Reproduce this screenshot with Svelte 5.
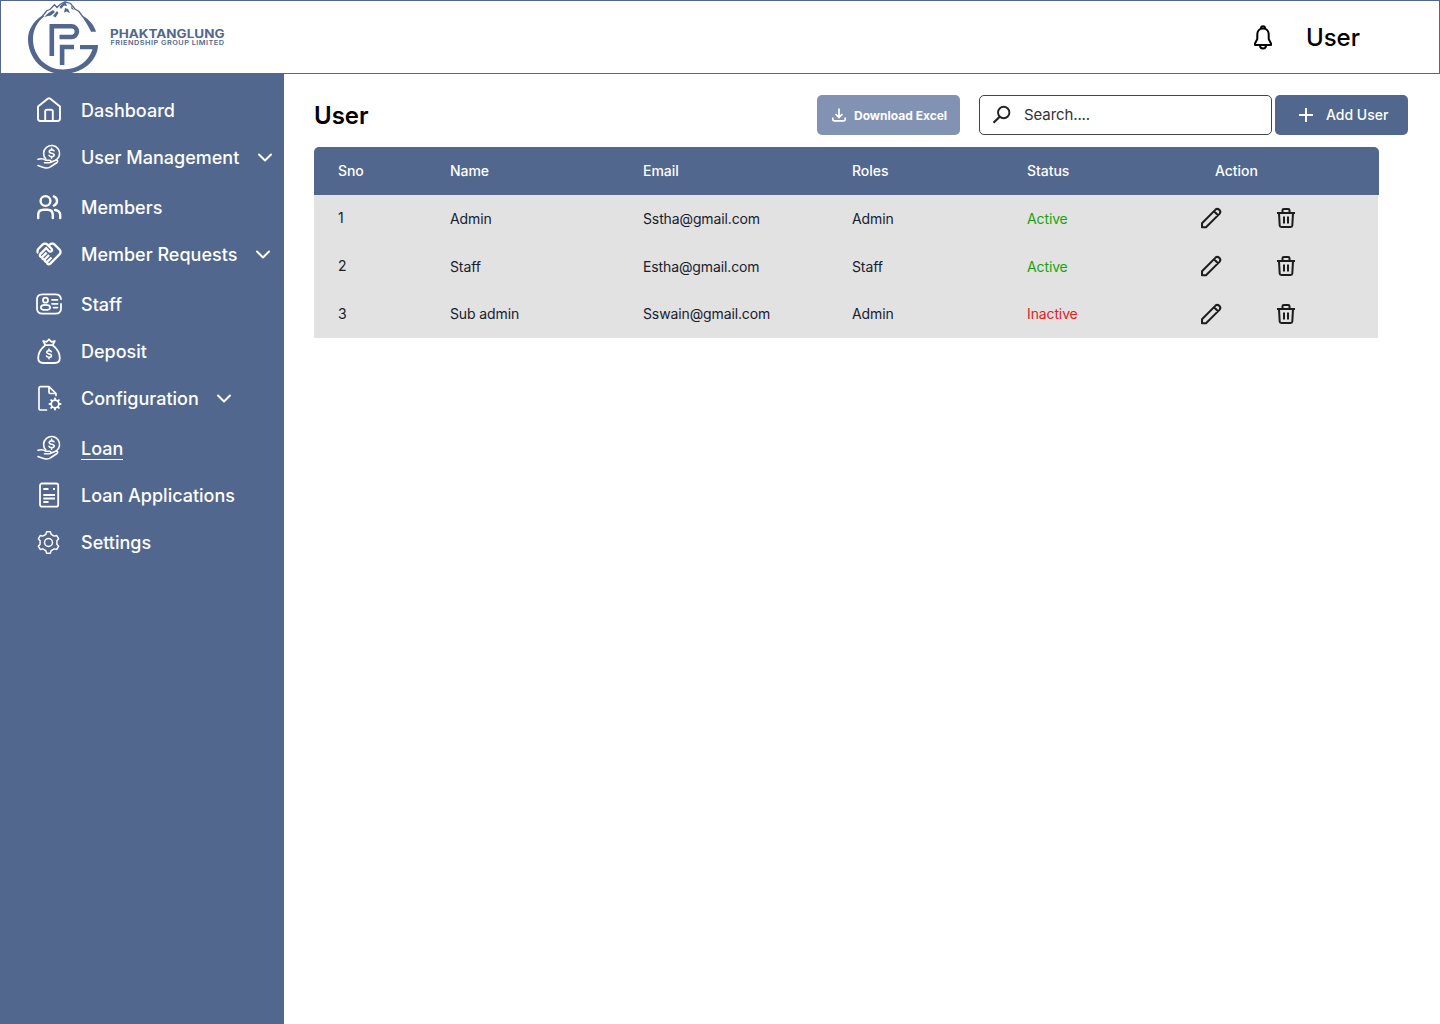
<script>
  const menu = [
    { label: 'Dashboard', icon: 'home' },
    { label: 'User Management', icon: 'loan', sub: true },
    { label: 'Members', icon: 'members' },
    { label: 'Member Requests', icon: 'handshake', sub: true },
    { label: 'Staff', icon: 'staff' },
    { label: 'Deposit', icon: 'deposit' },
    { label: 'Configuration', icon: 'config', sub: true },
    { label: 'Loan', icon: 'loan', active: true },
    { label: 'Loan Applications', icon: 'form' },
    { label: 'Settings', icon: 'settings' }
  ];

  const users = [
    { sno: 1, name: 'Admin', email: 'Sstha@gmail.com', role: 'Admin', status: 'Active' },
    { sno: 2, name: 'Staff', email: 'Estha@gmail.com', role: 'Staff', status: 'Active' },
    { sno: 3, name: 'Sub admin', email: 'Sswain@gmail.com', role: 'Admin', status: 'Inactive' }
  ];

  // Outline of a toothed wheel centred on (cx, cy).
  function gear(cx, cy, inner, outer, teeth) {
    const step = (Math.PI * 2) / teeth;
    const points = [];
    for (let i = 0; i < teeth; i++) {
      const a = i * step;
      for (const [f, r] of [[-0.3, inner], [-0.17, outer], [0.17, outer], [0.3, inner]]) {
        points.push(`${(cx + r * Math.sin(a + f * step)).toFixed(2)} ${(cy - r * Math.cos(a + f * step)).toFixed(2)}`);
      }
    }
    return 'M' + points.join('L') + 'Z';
  }
</script>

<header class="topbar">
  <svg class="logo" width="200" height="74" viewBox="27 0 200 74" role="img" aria-label="Phaktanglung Friendship Group Limited">
    <g fill="#52678d">
      <path d="M43 15C32 22 28 31 28 39C28 58 43 74 63 74C83 74 98 60 98 45H80V49.300H92.500C89 61 78 69.500 63 69.500C46 69.500 33 56 33 39C33 30 37 22 44 16.500Z" />
      <path d="M83 16C90 20 94.500 26 96 31.800H91C88 25 84 20 82 16Z" />
      <path d="M44 17L49 12.500L53 10L55 12L51 15.500L48 16Z" />
      <path d="M53 16L57 11L58.500 13L55.500 17.500Z" />
      <path d="M65 8L68 9L70 13L66.500 11.500L64 12.500Z" />
      <path d="M71 5.500L74 10L71.500 9Z" />
      <path d="M62 4L65.500 2L67 6L64 5.500L61 9L59.500 7Z" />
    </g>
    <path d="M42.500 16L47 10.500L50 9.500L54.500 4.800L57 7.500L60 4.500L65 1.800L70.500 3.500L75 9L79 11.500L83 17" fill="none" stroke="#52678d" stroke-width="1.300" />
    <g fill="none" stroke="#52678d" stroke-width="4.600">
      <path d="M51.800 56V26.200H71.500A5.400 5.400 0 0 1 71.500 37H59.500" />
      <path d="M74 47H62.100V65" />
    </g>
    <text x="110" y="37.600" font-size="11.200" font-weight="700" textLength="114.500" lengthAdjust="spacingAndGlyphs">PHAKTANGLUNG</text>
    <text x="110.500" y="45" font-size="6.200" font-weight="600" letter-spacing="0.4" textLength="114" lengthAdjust="spacingAndGlyphs">FRIENDSHIP GROUP LIMITED</text>
  </svg>
  <div class="account">
    <svg class="bell" width="24" height="28" viewBox="0 0 24 28" fill="none" stroke="#000" stroke-width="2" stroke-linejoin="round">
      <path d="M12 4.500C8 4.500 6.300 7.500 6.300 10.500V15L4 19.500V21H20V19.500L17.700 15V10.500C17.700 7.500 16 4.500 12 4.500Z" />
      <path d="M10 4.500C10 1.500 14 1.500 14 4.500M9 21.500C9 25.500 15 25.500 15 21.500" />
    </svg>
    <span>User</span>
  </div>
</header>

<div class="layout">
  <nav class="sidebar">
    {#each menu as item}
      <a class="item" class:sub={item.sub} class:current={item.active}>
        <svg class="icon" width="28" height="28" viewBox="0 0 28 28">
          {#if item.icon === 'home'}
            <path d="M3 10.500L13 2.600Q14 2 15 2.600L25 10.500V22.500Q25 25 22.500 25H5.500Q3 25 3 22.500ZM10.200 25V15.500Q10.200 13.800 12 13.800H16Q17.800 13.800 17.800 15.500V25" stroke-width="1.900" />
          {:else if item.icon === 'loan'}
            <g stroke-width="1.600">
              <path d="M10.800 16A8 8 0 1 1 21 17.200" />
              <path d="M19 7.800C18.600 6.600 14.400 6.200 14.200 8.500C14 10.800 19.300 9.700 19.200 12C19.100 14.300 14.700 14.200 14 12.300M16.600 5.200V6.700M16.600 13.600V15.200" />
              <path d="M3 16.300C7 15 8.500 15.500 11 17.300H14.500C16.500 17.300 16.500 19.700 14.500 19.700H9.500M16.500 19L20.500 17.300C22.500 16.500 23.500 18.300 22 19.500L16 23.500C13 26 10 25.200 3 22.500" />
            </g>
          {:else if item.icon === 'members'}
            <g stroke-width="2.400">
              <circle cx="10.500" cy="8" r="4.900" />
              <path d="M3.200 25V22Q3.200 16.800 8.500 16.800H12.500Q17.800 16.800 17.800 22V25M18.800 3.400A4.900 4.900 0 0 1 18.800 12.600M20 17Q25.200 18 25.200 22V25" />
            </g>
          {:else if item.icon === 'handshake'}
            <path
              class="solid"
              transform="translate(.2 .2) scale(1.150)"
              d="M12.220 19.850c-.180.180-.5.210-.710 0c-.180-.180-.210-.5 0-.710l3.390-3.390l-1.410-1.410l-3.390 3.390c-.190.2-.510.190-.710 0c-.210-.210-.180-.530 0-.710l3.390-3.390l-1.410-1.410l-3.390 3.390c-.180.180-.5.210-.710 0c-.190-.190-.190-.510 0-.710l3.390-3.390L9.240 10.100l-3.390 3.390c-.180.180-.5.210-.710 0c-.190-.2-.190-.510 0-.710L9.520 8.400l1.870 1.860c.950.950 2.590.940 3.540 0c.980-.980.980-2.560 0-3.540l-1.860-1.860l.280-.280c.780-.780 2.050-.780 2.830 0l4.240 4.240c.780.780.780 2.050 0 2.830L12.220 19.850zM21.830 13.070c1.560-1.560 1.560-4.090 0-5.660l-4.240-4.240c-1.560-1.560-4.090-1.560-5.660 0l-.280.280l-.280-.280c-1.560-1.560-4.090-1.560-5.660 0L2.170 6.710c-1.420 1.420-1.550 3.630-.4 5.190l1.450-1.450c-.390-.750-.260-1.700.370-2.330l3.540-3.540c.780-.780 2.050-.780 2.830 0l3.560 3.560c.180.180.210.5 0 .710c-.210.210-.530.180-.710 0L9.520 5.570l-5.800 5.790c-.980.970-.980 2.560 0 3.540c.390.390.890.630 1.420.7c.070.520.3 1.020.7 1.420c.4.4.9.630 1.420.7c.070.520.3 1.020.7 1.420c.4.4.9.630 1.420.7c.070.540.310 1.030.7 1.420c.470.470 1.100.730 1.770.730c.670 0 1.300-.260 1.770-.730L21.830 13.070z"
            />
          {:else if item.icon === 'staff'}
            <g stroke-width="1.800">
              <path d="M26 14V18.500Q26 23.600 20.500 23.600H7.500Q2 23.600 2 18.500V9.500Q2 4.400 7.500 4.400H20.500Q25.500 4.400 26 9" />
              <circle cx="10.500" cy="10.200" r="2.500" />
              <ellipse cx="10.500" cy="17.400" rx="4.600" ry="2.500" />
              <path d="M17 9.800H22.500M17 13.800H22.500M18.500 17.600H22.500" />
            </g>
          {:else if item.icon === 'deposit'}
            <g stroke-width="1.800">
              <path d="M10.300 8.200C6 11.500 3.200 16 3.200 21Q3.200 26 8.300 26H19.700Q24.800 26 24.800 21C24.800 16 22 11.500 17.700 8.200ZM10.300 8L8.200 4L11.500 4.800L14 2.300L16.500 4.800L19.800 4L17.700 8" />
              <path d="M16.400 14.700C15.800 13.200 11.800 13.200 11.700 15.200C11.600 17.400 16.500 16.300 16.500 18.700C16.500 20.700 12.100 20.700 11.500 19M14 12V13.600M14 20.200V21.800" stroke-width="1.600" />
            </g>
          {:else if item.icon === 'config'}
            <g stroke-width="1.700">
              <path d="M11.500 26H5.600Q4 26 4 24.400V4.200Q4 2.700 5.600 2.700H14L21 9.500V11.500M14 3V8.300Q14 9.500 15.300 9.500H20.500" />
              <circle cx="20" cy="20" r="3.800" />
              <path d="M20 14.500V16M20 24V25.500M14.500 20H16M24 20H25.500M16.100 16.100L17.200 17.200M22.800 22.800L23.900 23.900M23.900 16.100L22.800 17.200M17.200 22.800L16.100 23.900" stroke-width="1.900" />
            </g>
          {:else if item.icon === 'form'}
            <g stroke-width="1.800" stroke-linecap="butt">
              <rect x="5" y="2.500" width="18.200" height="23.200" rx="2" />
              <path d="M8.300 8H13.500M18 8H20M8.300 14H20M8.300 17.500H20M8.300 21H13.500" />
            </g>
          {:else}
            <g stroke-width="1.500">
              <path d={gear(13.500, 14.500, 8.600, 10.800, 6)} />
              <circle cx="13.500" cy="14.500" r="4" />
            </g>
          {/if}
        </svg>
        <span class="label">{item.label}</span>
        {#if item.sub}
          <svg class="chevron" width="16" height="11" viewBox="0 0 16 11"><path d="M2 2.500L8 8.500L14 2.500" stroke-width="2" /></svg>
        {/if}
      </a>
    {/each}
  </nav>

  <main>
    <div class="toolbar">
      <h1>User</h1>
      <button class="download">
        <svg width="16" height="16" viewBox="0 0 16 16" fill="none" stroke="#fff" stroke-width="1.700">
          <path d="M8 1.500V10M4.500 7L8 10.500L11.500 7M1.800 10.500V12.500Q1.800 13.800 3 13.800H13Q14.200 13.800 14.200 12.500V10.500" />
        </svg>
        <span>Download Excel</span>
      </button>
      <div class="search">
        <svg width="20" height="20" viewBox="0 0 20 20" fill="none" stroke="#222" stroke-width="1.900">
          <circle cx="11.700" cy="7.500" r="5.700" />
          <path d="M7.700 11.700L1.500 17.700" stroke-width="2.200" />
        </svg>
        <span>Search....</span>
      </div>
      <button class="add">
        <svg width="16" height="16" viewBox="0 0 16 16" stroke="#fff" stroke-width="2"><path d="M8 1V15M1 8H15" /></svg>
        <span>Add User</span>
      </button>
    </div>

    <div class="table">
      <div class="row head">
        <span>Sno</span><span>Name</span><span>Email</span><span>Roles</span><span>Status</span><span class="action">Action</span>
      </div>
      {#each users as user}
        <div class="row">
          <span class="sno">{user.sno}</span>
          <span>{user.name}</span>
          <span>{user.email}</span>
          <span>{user.role}</span>
          <span class={user.status.toLowerCase()}>{user.status}</span>
          <span class="tools">
            <svg width="24" height="24" viewBox="0 0 24 24" fill="none" stroke="#1c1c1c" stroke-width="2" stroke-linejoin="round">
              <path d="M3 21.300V17.300L16.500 3.600Q18.300 2 20.300 3.800Q22.200 5.700 20.700 7.600L7 21.300ZM15 5.300L19 9.300" />
            </svg>
            <svg width="24" height="24" viewBox="0 0 24 24" fill="none" stroke="#1c1c1c" stroke-width="2" stroke-linejoin="round">
              <path d="M3 7H21M5 7L5.700 19.500Q5.800 21 7.300 21H16.700Q18.200 21 18.300 19.500L19 7M8.500 6.500V4.300Q8.500 3 9.800 3H14.200Q15.500 3 15.500 4.300V6.500M10 10.500V17.500M14 10.500V17.500" />
            </svg>
          </span>
        </div>
      {/each}
    </div>
  </main>
</div>

<style>
  :global(body) {
    background: #fff;
    font-family: Inter, 'Liberation Sans', sans-serif;
  }
  .topbar {
    box-sizing: border-box;
    height: 74px;
    border: 1px solid #52678d;
    display: flex;
    justify-content: space-between;
    align-items: center;
    padding: 0 79px 0 26px;
  }
  .logo {
    flex: none;
  }
  .logo text {
    fill: #52678d;
  }
  .account {
    display: flex;
    align-items: center;
    gap: 31px;
    padding-top: 2px;
    font-size: 24px;
    font-weight: 500;
    line-height: 30px;
  }
  .layout {
    display: flex;
    height: 950px;
  }
  .sidebar {
    box-sizing: border-box;
    width: 284px;
    flex: none;
    background: #52678d;
    color: #fff;
    padding: 22px 0 0 35px;
    display: flex;
    flex-direction: column;
    gap: 19px;
  }
  .item {
    display: flex;
    align-items: center;
    height: 28px;
    font-size: 18px;
    font-weight: 500;
  }
  .item.sub {
    margin-bottom: 3px;
  }
  .icon,
  .chevron {
    fill: none;
    stroke: #fff;
    stroke-linecap: round;
    stroke-linejoin: round;
    flex: none;
  }
  .icon {
    margin-right: 18px;
  }
  .solid {
    fill: #fff;
    stroke: none;
  }
  .chevron {
    margin-left: 17.5px;
  }
  .label {
    line-height: 22px;
    padding-top: 1px;
  }
  .current .label {
    border-bottom: 1px solid #fff;
    line-height: 21px;
  }
  main {
    flex: 1;
    padding: 21px 32px 0 30px;
  }
  .toolbar {
    display: flex;
    align-items: center;
    height: 40px;
  }
  h1 {
    margin: 0 auto 0 0;
    font-size: 24px;
    font-weight: 600;
  }
  button {
    border: 0;
    border-radius: 5px;
    height: 40px;
    color: #fff;
    font-family: inherit;
    display: flex;
    align-items: center;
    box-sizing: border-box;
    padding: 0;
  }
  .download {
    width: 143px;
    background: #8192b3;
    font-size: 12px;
    font-weight: 700;
    padding-left: 14px;
    gap: 7px;
    margin-right: 19px;
  }
  .search {
    box-sizing: border-box;
    width: 293px;
    height: 40px;
    border: 1px solid #444;
    border-radius: 5px;
    display: flex;
    align-items: center;
    gap: 12px;
    padding-left: 12px;
    margin-right: 3px;
    font-size: 15px;
    letter-spacing: -0.1px;
    color: #333;
  }
  .search span,
  .add span {
    padding-bottom: 2px;
  }
  .add {
    width: 133px;
    background: #52678d;
    font-size: 14px;
    font-weight: 500;
    padding-left: 23px;
    gap: 12px;
  }
  .table {
    margin-top: 12px;
    width: 1065px;
  }
  .row {
    box-sizing: border-box;
    width: 1064px;
    height: 48px;
    padding: 0 0 2px 24px;
    display: grid;
    grid-template-columns: 112px 193px 209px 175px 172px 1fr;
    align-items: center;
    background: #e2e2e2;
    color: #17202e;
    font-size: 14px;
    letter-spacing: -0.12px;
  }
  .row:last-child {
    height: 47px;
  }
  .head {
    width: 1065px;
    background: #52678d;
    color: #fff;
    font-weight: 500;
    letter-spacing: -0.05px;
    border-radius: 5px 5px 0 0;
  }
  .row:not(:last-child) .sno {
    padding-bottom: 2px;
  }
  .action {
    padding-left: 16px;
  }
  .active {
    color: #17a50b;
  }
  .inactive {
    color: #e32020;
  }
  .tools {
    display: flex;
    gap: 51px;
  }
</style>
